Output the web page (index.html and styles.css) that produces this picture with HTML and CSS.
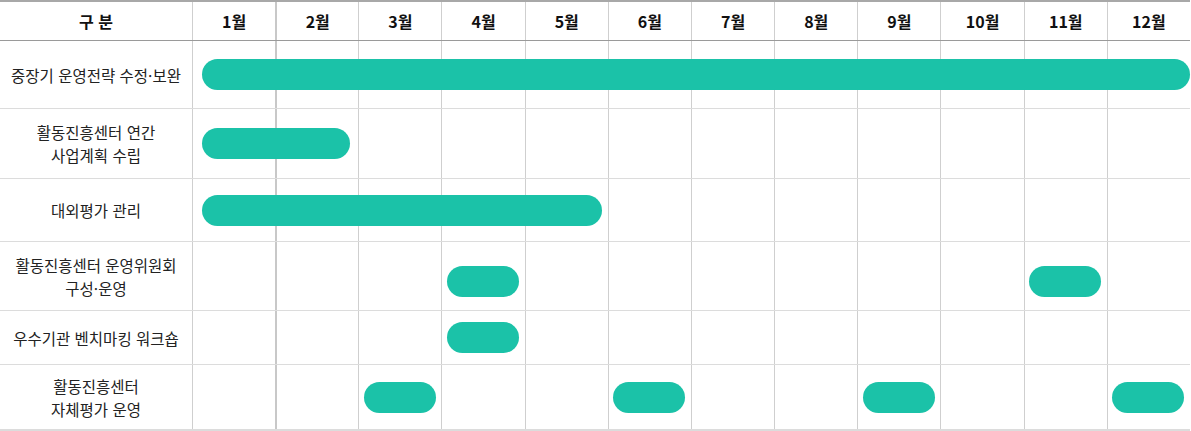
FILE: index.html
```html
<!DOCTYPE html>
<html lang="ko">
<head>
<meta charset="utf-8">
<link rel="stylesheet" href="styles.css">
</head>
<body>
<div class="chart">
  <div class="row head">
    <div class="label">구 분</div>
    <div class="cells">
      <div class="c">1월</div><div class="c c2">2월</div><div class="c">3월</div><div class="c">4월</div>
      <div class="c">5월</div><div class="c">6월</div><div class="c">7월</div><div class="c">8월</div>
      <div class="c">9월</div><div class="c">10월</div><div class="c">11월</div><div class="c">12월</div>
    </div>
  </div>

  <div class="row r1">
    <div class="label">중장기 운영전략 수정·보완</div>
    <div class="cells"><div class="c"></div><div class="c c2"></div><div class="c"></div><div class="c"></div><div class="c"></div><div class="c"></div><div class="c"></div><div class="c"></div><div class="c"></div><div class="c"></div><div class="c"></div><div class="c"></div></div>
    <div class="bar span full" style="grid-column: 2 / 14"></div>
  </div>

  <div class="row r2">
    <div class="label">활동진흥센터 연간<br>사업계획 수립</div>
    <div class="cells"><div class="c"></div><div class="c c2"></div><div class="c"></div><div class="c"></div><div class="c"></div><div class="c"></div><div class="c"></div><div class="c"></div><div class="c"></div><div class="c"></div><div class="c"></div><div class="c"></div></div>
    <div class="bar span" style="grid-column: 2 / 4"></div>
  </div>

  <div class="row r3">
    <div class="label">대외평가 관리</div>
    <div class="cells"><div class="c"></div><div class="c c2"></div><div class="c"></div><div class="c"></div><div class="c"></div><div class="c"></div><div class="c"></div><div class="c"></div><div class="c"></div><div class="c"></div><div class="c"></div><div class="c"></div></div>
    <div class="bar span wide" style="grid-column: 2 / 7"></div>
  </div>

  <div class="row r4">
    <div class="label">활동진흥센터 운영위원회<br>구성·운영</div>
    <div class="cells"><div class="c"></div><div class="c c2"></div><div class="c"></div><div class="c"></div><div class="c"></div><div class="c"></div><div class="c"></div><div class="c"></div><div class="c"></div><div class="c"></div><div class="c"></div><div class="c"></div></div>
    <div class="bar one low" style="grid-column: 5 / 6"></div>
    <div class="bar one low" style="grid-column: 12 / 13"></div>
  </div>

  <div class="row r5">
    <div class="label">우수기관 벤치마킹 워크숍</div>
    <div class="cells"><div class="c"></div><div class="c c2"></div><div class="c"></div><div class="c"></div><div class="c"></div><div class="c"></div><div class="c"></div><div class="c"></div><div class="c"></div><div class="c"></div><div class="c"></div><div class="c"></div></div>
    <div class="bar one" style="grid-column: 5 / 6"></div>
  </div>

  <div class="row r6">
    <div class="label">활동진흥센터<br>자체평가 운영</div>
    <div class="cells"><div class="c"></div><div class="c c2"></div><div class="c"></div><div class="c"></div><div class="c"></div><div class="c"></div><div class="c"></div><div class="c"></div><div class="c"></div><div class="c"></div><div class="c"></div><div class="c"></div></div>
    <div class="bar one" style="grid-column: 4 / 5"></div>
    <div class="bar one" style="grid-column: 7 / 8"></div>
    <div class="bar one" style="grid-column: 10 / 11"></div>
    <div class="bar one" style="grid-column: 13 / 14"></div>
  </div>
</div>
</body>
</html>
```

FILE: styles.css
```css
* { box-sizing: border-box; }
html, body { margin: 0; padding: 0; background: #fff; }
body {
  font-family: "Noto Sans CJK KR", "Noto Sans", sans-serif;
  color: #222;
}
.chart {
  width: 1190px;
  border-top: 2px solid #a8a8a8;
}
.row {
  display: grid;
  grid-template-columns: 192px repeat(12, 1fr);
  border-bottom: 1px solid #dcdcdc;
}
.row > .label, .row > .cells, .row > .bar { grid-row: 1; }
.label {
  grid-column: 1 / 2;
  display: flex;
  align-items: center;
  justify-content: center;
  text-align: center;
  font-size: 15.5px;
  line-height: 23px;
  letter-spacing: 0;
  color: #222;
  padding-top: 1px;
}
.cells {
  grid-column: 2 / 14;
  display: grid;
  grid-template-columns: repeat(12, 1fr);
}
.c {
  border-left: 1px solid #cfcfcf;
  display: flex;
  align-items: center;
  justify-content: center;
}
.c2 { border-left: 2px solid #c8c8c8; }

.head { height: 39px; border-bottom: 1px solid #9a9a9a; }
.head .label, .head .c {
  font-size: 16px;
  font-weight: 700;
  color: #111;
  letter-spacing: 0;
  padding-top: 0;
}
.r1 { height: 68px; }
.r2 { height: 70px; }
.r3 { height: 63px; }
.r4 { height: 69px; }
.r5 { height: 54px; }
.r6 { height: 66px; border-bottom: 2px solid #dcdcdc; }

.bar {
  align-self: center;
  height: 31px;
  border-radius: 16px;
  background: #1bc2a8;
}
.bar.span { margin-left: 10px; margin-right: 8px; }
.bar.wide { margin-right: 6px; }
.bar.full { margin-right: 0; }
.bar.one { width: 72px; justify-self: center; }
.bar.low { margin-top: 10px; }
```
